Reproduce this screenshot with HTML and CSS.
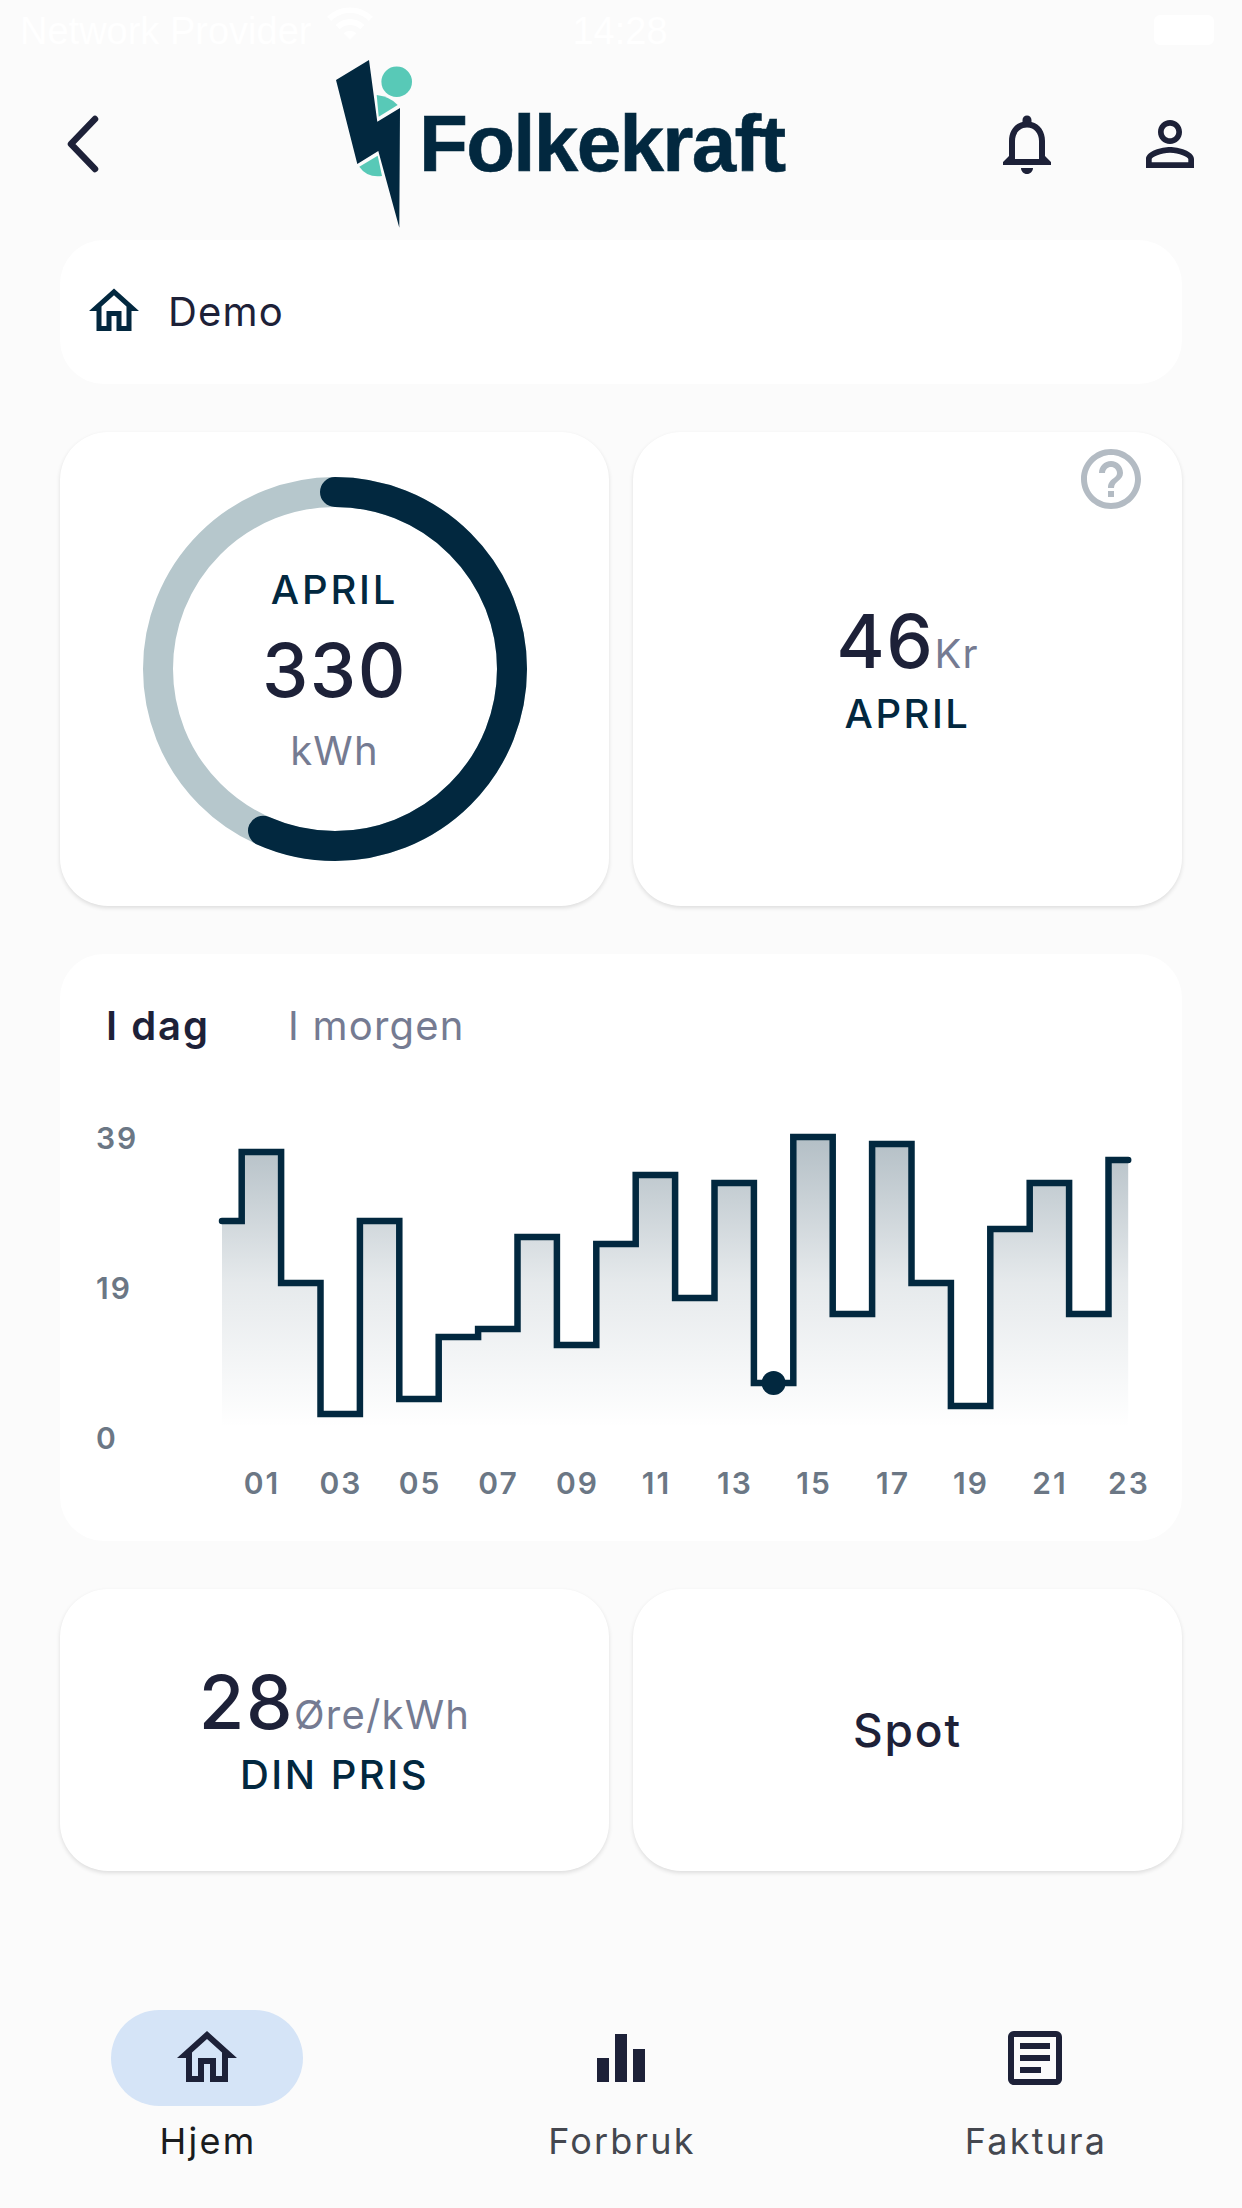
FILE: index.html
```html
<!DOCTYPE html>
<html lang="en">
<head>
    <meta charset="UTF-8" />
    <meta name="viewport" content="width=device-width, initial-scale=1.0" />
    <title>Folkekraft</title>
    <link rel="stylesheet" href="styles.css">
</head>
<body>
    <div class="status-bar">
        <div class="status-left">
            <span>Network Provider</span>
            <svg class="status-wifi" viewBox="0 0 24 24"><path d="M1 9l2 2c5-5 13-5 18 0l2-2C17 3 7 3 1 9zm8 8l3 3 3-3c-1.650-1.660-4.340-1.660-6 0zm-4-4l2 2c2.760-2.760 7.240-2.760 10 0l2-2C15.140 9.140 8.870 9.140 5 13z"/></svg>
        </div>
        <span class="status-time">14:28</span>
        <div class="status-right">
            <div class="status-battery"></div>
        </div>
    </div>

    <header class="topbar">
        <svg class="back-icon" viewBox="0 0 36 60"><path d="M31 5 L7 30 L31 55" /></svg>
        <div class="logo">
            <svg class="logo-mark" viewBox="335 59 70 170">
                <path fill="#02283f" d="M336 80 L369 60 L377.300 121.700 L400 108 L399.300 227.700 L378.300 151 L357.300 164 Z"/>
                <circle fill="#58c9b7" cx="396.700" cy="81.700" r="15.300"/>
                <path fill="#58c9b7" d="M376.700 95 Q390 96.500 397.700 105 L378.700 116.700 Z"/>
                <path fill="#58c9b7" d="M359.300 166.700 L377.700 155.700 L382 176 Q367 178 359.300 166.700 Z"/>
            </svg>
            <span class="logo-text">Folkekraft</span>
        </div>
        <div class="top-actions">
            <svg class="top-icon" viewBox="0 0 24 24"><path d="M12 22c1.100 0 2-.9 2-2h-4c0 1.100.9 2 2 2zm6-6v-5c0-3.070-1.630-5.640-4.500-6.320V4c0-.83-.67-1.500-1.500-1.500s-1.500.67-1.500 1.500v.68C7.640 5.360 6 7.920 6 11v5l-2 2v1h16v-1l-2-2zm-2 1H8v-6c0-2.480 1.510-4.500 4-4.500s4 2.020 4 4.500v6z"/></svg>
            <svg class="top-icon" viewBox="0 0 24 24"><path d="M12 5.900c1.160 0 2.100.94 2.100 2.100s-.94 2.100-2.100 2.100S9.900 9.160 9.900 8s.94-2.100 2.100-2.100m0 9c2.970 0 6.100 1.460 6.100 2.100v1.100H5.900V17c0-.64 3.130-2.100 6.100-2.100M12 4C9.790 4 8 5.790 8 8s1.790 4 4 4 4-1.790 4-4-1.790-4-4-4zm0 9c-2.670 0-8 1.340-8 4v3h16v-3c0-2.660-5.330-4-8-4z"/></svg>
        </div>
    </header>

    <main class="content">
        <div class="demo-card">
            <svg class="demo-icon" viewBox="0 0 24 24"><path d="M12 5.690l5 4.500V18h-2v-6H9v6H7v-7.810l5-4.500M12 3L2 12h3v8h6v-6h2v6h6v-8h3L12 3z"/></svg>
            <span>Demo</span>
        </div>

        <div class="card-row">
            <div class="card card-tall">
                <div class="ring">
                    <svg class="ring-svg" viewBox="0 0 384 384">
                        <circle class="ring-track" cx="192" cy="192" r="177"/>
                        <circle class="ring-value" cx="192" cy="192" r="177" pathLength="360" stroke-dasharray="204 360" transform="rotate(-90 192 192)"/>
                    </svg>
                    <div class="ring-label">
                        <span class="label-month">APRIL</span>
                        <span class="big-number">330</span>
                        <span class="unit">kWh</span>
                    </div>
                </div>
            </div>
            <div class="card card-tall card-stack">
                <svg class="help-icon" viewBox="0 0 24 24"><path d="M11 18h2v-2h-2v2zm1-16C6.480 2 2 6.480 2 12s4.480 10 10 10 10-4.480 10-10S17.520 2 12 2zm0 18c-4.410 0-8-3.590-8-8s3.590-8 8-8 8 3.590 8 8-3.590 8-8 8zm0-14c-2.210 0-4 1.790-4 4h2c0-1.100.9-2 2-2s2 .9 2 2c0 2-3 1.750-3 5h2c0-2.250 3-2.500 3-5 0-2.210-1.790-4-4-4z"/></svg>
                <div class="value-row">
                    <span class="big-number">46</span>
                    <span class="unit">Kr</span>
                </div>
                <span class="label-caps">APRIL</span>
            </div>
        </div>

        <section class="chart-card">
            <div class="chart-tabs">
                <span class="tab tab-active">I dag</span>
                <span class="tab">I morgen</span>
            </div>
            <!-- viewBox uses screen coords, easier to read the values off -->
            <svg class="chart" viewBox="60 1110 1122 412">
                <defs>
                    <linearGradient id="chartFill" gradientUnits="userSpaceOnUse" x1="0" y1="1137" x2="0" y2="1428">
                        <stop offset="0" stop-color="#02283f" stop-opacity="0.3"/>
                        <stop offset="0.5" stop-color="#02283f" stop-opacity="0.1"/>
                        <stop offset="1" stop-color="#02283f" stop-opacity="0"/>
                    </linearGradient>
                </defs>
                <path fill="url(#chartFill)" d="M222 1221 H241.700 V1152 H281.100 V1283 H320.500 V1414 H359.900 V1221 H399.300 V1399 H438.700 V1337 H478.100 V1329 H517.500 V1237 H556.900 V1345 H596.300 V1244 H635.700 V1175 H675.100 V1298 H714.500 V1183 H753.900 V1383 H793.300 V1137 H832.700 V1314 H872.100 V1144 H911.500 V1283 H950.900 V1406 H990.300 V1229 H1029.700 V1183 H1069.100 V1314 H1108.500 V1160 H1128.200 V1433 H222 Z"/>
                <path class="chart-line" d="M222 1221 H241.700 V1152 H281.100 V1283 H320.500 V1414 H359.900 V1221 H399.300 V1399 H438.700 V1337 H478.100 V1329 H517.500 V1237 H556.900 V1345 H596.300 V1244 H635.700 V1175 H675.100 V1298 H714.500 V1183 H753.900 V1383 H793.300 V1137 H832.700 V1314 H872.100 V1144 H911.500 V1283 H950.900 V1406 H990.300 V1229 H1029.700 V1183 H1069.100 V1314 H1108.500 V1160 H1128.200"/>
                <circle cx="773.600" cy="1383" r="12" fill="#02283f"/>
                <g class="axis-text">
                    <text x="96" y="1149">39</text>
                    <text x="96" y="1299">19</text>
                    <text x="96" y="1449">0</text>
                </g>
                <g class="axis-text axis-hours">
                    <text x="262" y="1494">01</text>
                    <text x="341" y="1494">03</text>
                    <text x="420" y="1494">05</text>
                    <text x="498.500" y="1494">07</text>
                    <text x="577.500" y="1494">09</text>
                    <text x="656.500" y="1494">11</text>
                    <text x="735" y="1494">13</text>
                    <text x="814" y="1494">15</text>
                    <text x="893" y="1494">17</text>
                    <text x="971" y="1494">19</text>
                    <text x="1050" y="1494">21</text>
                    <text x="1129" y="1494">23</text>
                </g>
            </svg>
        </section>

        <div class="card-row">
            <div class="card card-short card-stack">
                <div class="value-row">
                    <span class="big-number">28</span>
                    <span class="unit">Øre/kWh</span>
                </div>
                <span class="label-caps">DIN PRIS</span>
            </div>
            <div class="card card-short">
                <span class="spot">Spot</span>
            </div>
        </div>
    </main>

    <nav class="bottom-nav">
        <div class="nav-item nav-active">
            <div class="nav-pill">
                <svg class="nav-icon" viewBox="0 0 24 24"><path d="M12 5.690l5 4.500V18h-2v-6H9v6H7v-7.810l5-4.500M12 3L2 12h3v8h6v-6h2v6h6v-8h3L12 3z"/></svg>
            </div>
            <span class="nav-label">Hjem</span>
        </div>
        <div class="nav-item">
            <div class="nav-pill">
                <svg class="nav-icon" viewBox="0 0 72 72"><path d="M12 36h12v24H12zM30 12h12v48H30zM48 27h12v33H48z"/></svg>
            </div>
            <span class="nav-label">Forbruk</span>
        </div>
        <div class="nav-item">
            <div class="nav-pill">
                <svg class="nav-icon" viewBox="0 0 24 24"><path d="M19 5v14H5V5h14m0-2H5c-1.100 0-2 .9-2 2v14c0 1.100.9 2 2 2h14c1.100 0 2-.9 2-2V5c0-1.100-.9-2-2-2z"/><path d="M14 17H7v-2h7v2zm3-4H7v-2h10v2zm0-4H7V7h10v2z"/></svg>
            </div>
            <span class="nav-label">Faktura</span>
        </div>
    </nav>
</body>
</html>
```

FILE: styles.css
```css
* {
    box-sizing: border-box;
}
body {
    margin: 0;
    width: 1242px;
    height: 2208px;
    overflow: hidden;
    background-color: #fbfbfb;
    font-family: Inter, "Noto Sans", sans-serif;
    color: #1d2138;
    display: flex;
    flex-direction: column;
}

/* status bar, white on nearly white like the real one */
.status-bar {
    height: 60px;
    padding: 10px 28px 0 20px;
    display: flex;
    color: #fff;
    font-family: "Liberation Sans", sans-serif;
    font-size: 38px;
}
.status-left,
.status-right {
    flex: 1;
    display: flex;
    align-items: flex-start;
}
.status-left {
    gap: 14px;
}
.status-right {
    justify-content: flex-end;
}
.status-wifi {
    width: 50px;
    height: 50px;
    margin-top: -12px;
    fill: #fff;
}
.status-time {
    margin-left: 6px;
}
.status-battery {
    width: 60px;
    height: 30px;
    margin-top: 5px;
    border-radius: 6px;
    background-color: #fff;
}

.topbar {
    height: 168px;
    display: flex;
    align-items: center;
    padding: 0 36px 0 64px;
}
.back-icon {
    width: 36px;
    height: 60px;
    fill: none;
    stroke: #1d2138;
    stroke-width: 6.5;
    stroke-linecap: round;
    stroke-linejoin: round;
}
.logo {
    display: flex;
    align-items: center;
    height: 168px;
    margin-left: 235px;
}
.logo-mark {
    width: 70px;
    height: 170px;
    overflow: visible;
}
.logo-text {
    margin-left: 14px;
    font-family: "Liberation Sans", sans-serif;
    font-weight: 700;
    font-size: 80px;
    letter-spacing: -1.7px;
    color: #02283f;
    -webkit-text-stroke: 0.6px #02283f;
}
.top-actions {
    margin-left: auto;
    display: flex;
    gap: 71px;
}
.top-icon {
    width: 72px;
    height: 72px;
    fill: #1d2138;
}

.content {
    padding: 12px 60px 0;
    display: flex;
    flex-direction: column;
    gap: 48px;
}
.demo-card {
    height: 144px;
    border-radius: 44px;
    background-color: #fff;
    display: flex;
    align-items: center;
    padding: 0 0 2px 24px;
    gap: 24px;
    font-size: 40px;
    letter-spacing: 1.2px;
}
.demo-icon {
    width: 60px;
    height: 60px;
    fill: #02283f;
}

.card-row {
    display: grid;
    grid-template-columns: 549px 549px;
    gap: 24px;
}
.card {
    position: relative;
    border-radius: 48px;
    background-color: #fff;
    box-shadow: 0 2px 4px rgba(0, 0, 0, 0.12);
    display: flex;
    flex-direction: column;
    align-items: center;
    justify-content: center;
}
.card-tall {
    height: 474px;
}
.card-short {
    height: 282px;
}
.card-stack {
    padding-bottom: 7px;
}

.ring {
    position: relative;
    width: 384px;
    height: 384px;
}
.ring-svg {
    width: 384px;
    height: 384px;
    fill: none;
    stroke-width: 30;
}
.ring-track {
    stroke: #b6c7cc;
}
.ring-value {
    stroke: #02283f;
    stroke-linecap: round;
}
.ring-label {
    position: absolute;
    inset: 0;
    display: flex;
    flex-direction: column;
    align-items: center;
    justify-content: center;
}
.label-month {
    font-size: 40px;
    font-weight: 500;
    line-height: 60px;
    letter-spacing: 2.8px;
    margin-bottom: 2px;
    color: #02283f;
}
.big-number {
    font-size: 74px;
    font-weight: 500;
    line-height: 96px;
    letter-spacing: 1.5px;
}
.unit {
    font-size: 40px;
    line-height: 56px;
    letter-spacing: 1.2px;
    color: #757b92;
}
.ring-label .unit {
    margin-top: 5px;
}
.value-row {
    display: flex;
    align-items: baseline;
}
.label-caps {
    font-size: 40px;
    font-weight: 500;
    line-height: 50px;
    letter-spacing: 2.5px;
    color: #02283f;
}
.help-icon {
    position: absolute;
    top: 11px;
    right: 35px;
    width: 72px;
    height: 72px;
    fill: #b3bbc3;
}
.spot {
    font-size: 46px;
    font-weight: 500;
    letter-spacing: 1.8px;
}

.chart-card {
    height: 587px;
    border-radius: 44px;
    background-color: #fff;
    overflow: hidden;
}
.chart-tabs {
    height: 156px;
    padding: 48px 0 0 46px;
    display: flex;
    gap: 78px;
}
.tab {
    font-size: 40px;
    line-height: 48px;
    letter-spacing: 1.2px;
    color: #757b92;
}
.tab-active {
    font-weight: 600;
    letter-spacing: 2px;
    color: #1d2138;
}
.chart {
    display: block;
    width: 1122px;
    height: 412px;
}
.chart-line {
    fill: none;
    stroke: #02283f;
    stroke-width: 6.5;
    stroke-linecap: round;
}
.axis-text text {
    font-size: 30px;
    font-weight: 600;
    letter-spacing: 2px;
    fill: #6b7785;
}
.axis-hours text {
    text-anchor: middle;
}

.bottom-nav {
    margin-top: auto;
    height: 198px;
    display: grid;
    grid-template-columns: repeat(3, 414px);
}
.nav-item {
    display: flex;
    flex-direction: column;
    align-items: center;
    font-size: 36px;
    letter-spacing: 2.2px;
    color: #44474f;
}
.nav-active {
    color: #1a1c1e;
}
.nav-label {
    padding-left: 2px;
}
.nav-pill {
    width: 192px;
    height: 96px;
    border-radius: 48px;
    display: flex;
    align-items: center;
    justify-content: center;
    margin-bottom: 13px;
}
.nav-active .nav-pill {
    background-color: #d5e4f7;
}
.nav-icon {
    width: 72px;
    height: 72px;
    fill: #1d2138;
}
```
